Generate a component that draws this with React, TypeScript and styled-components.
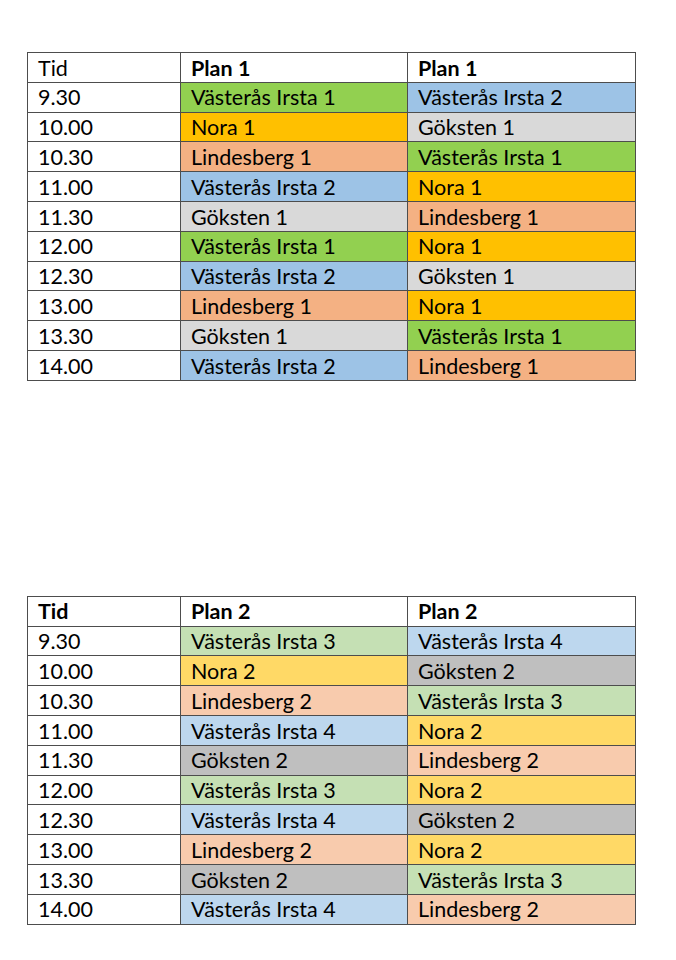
import React from 'react';
import styled, { createGlobalStyle } from 'styled-components';

const GlobalStyle = createGlobalStyle`
  html, body {
    margin: 0;
    padding: 0;
    background: #ffffff;
  }
`;

type Slot = {
  time: string;
  a: string;
  b: string;
};

type Schedule = {
  title: string;
  boldTid: boolean;
  colors: Record<string, string>;
  slots: Slot[];
};

const schedules: Schedule[] = [
  {
    title: 'Plan 1',
    boldTid: false,
    colors: {
      'Västerås Irsta 1': '#92d050',
      'Västerås Irsta 2': '#9dc3e6',
      'Nora 1': '#ffc000',
      'Göksten 1': '#d9d9d9',
      'Lindesberg 1': '#f4b183',
    },
    slots: [
      { time: '9.30', a: 'Västerås Irsta 1', b: 'Västerås Irsta 2' },
      { time: '10.00', a: 'Nora 1', b: 'Göksten 1' },
      { time: '10.30', a: 'Lindesberg 1', b: 'Västerås Irsta 1' },
      { time: '11.00', a: 'Västerås Irsta 2', b: 'Nora 1' },
      { time: '11.30', a: 'Göksten 1', b: 'Lindesberg 1' },
      { time: '12.00', a: 'Västerås Irsta 1', b: 'Nora 1' },
      { time: '12.30', a: 'Västerås Irsta 2', b: 'Göksten 1' },
      { time: '13.00', a: 'Lindesberg 1', b: 'Nora 1' },
      { time: '13.30', a: 'Göksten 1', b: 'Västerås Irsta 1' },
      { time: '14.00', a: 'Västerås Irsta 2', b: 'Lindesberg 1' },
    ],
  },
  {
    title: 'Plan 2',
    boldTid: true,
    colors: {
      'Västerås Irsta 3': '#c5e0b4',
      'Västerås Irsta 4': '#bdd7ee',
      'Nora 2': '#ffd966',
      'Göksten 2': '#bfbfbf',
      'Lindesberg 2': '#f8cbad',
    },
    slots: [
      { time: '9.30', a: 'Västerås Irsta 3', b: 'Västerås Irsta 4' },
      { time: '10.00', a: 'Nora 2', b: 'Göksten 2' },
      { time: '10.30', a: 'Lindesberg 2', b: 'Västerås Irsta 3' },
      { time: '11.00', a: 'Västerås Irsta 4', b: 'Nora 2' },
      { time: '11.30', a: 'Göksten 2', b: 'Lindesberg 2' },
      { time: '12.00', a: 'Västerås Irsta 3', b: 'Nora 2' },
      { time: '12.30', a: 'Västerås Irsta 4', b: 'Göksten 2' },
      { time: '13.00', a: 'Lindesberg 2', b: 'Nora 2' },
      { time: '13.30', a: 'Göksten 2', b: 'Västerås Irsta 3' },
      { time: '14.00', a: 'Västerås Irsta 4', b: 'Lindesberg 2' },
    ],
  },
];

const Page = styled.div`
  width: 676px;
  min-height: 960px;
  box-sizing: border-box;
  padding: 52px 0 0 27px;
  display: flex;
  flex-direction: column;
  gap: 215px;
  font-family: Lato, 'Liberation Sans', sans-serif;
  color: #000;
`;

const Table = styled.table`
  border-collapse: collapse;
  width: 608px;
  table-layout: fixed;
`;

const Row = styled.tr`
  height: 29.8px;
`;

const Cell = styled.td<{ $bg?: string; $bold?: boolean }>`
  border: 1.5px solid #4d4d4d;
  padding: 2px 0 0 10px;
  font-size: 21.5px;
  line-height: 1;
  font-weight: ${(p) => (p.$bold ? 700 : 400)};
  background: ${(p) => p.$bg || '#ffffff'};
  white-space: nowrap;
  vertical-align: middle;
  box-sizing: border-box;
`;

const ScheduleTable = ({ schedule }: { schedule: Schedule }) => (
  <Table>
    <colgroup>
      <col style={{ width: 153 }} />
      <col style={{ width: 227 }} />
      <col style={{ width: 228 }} />
    </colgroup>
    <tbody>
      <Row>
        <Cell $bold={schedule.boldTid}>Tid</Cell>
        <Cell $bold>{schedule.title}</Cell>
        <Cell $bold>{schedule.title}</Cell>
      </Row>
      {schedule.slots.map((s) => (
        <Row key={s.time}>
          <Cell>{s.time}</Cell>
          <Cell $bg={schedule.colors[s.a]}>{s.a}</Cell>
          <Cell $bg={schedule.colors[s.b]}>{s.b}</Cell>
        </Row>
      ))}
    </tbody>
  </Table>
);

const App = () => (
  <>
    <GlobalStyle />
    <Page>
      {schedules.map((s) => (
        <ScheduleTable key={s.title} schedule={s} />
      ))}
    </Page>
  </>
);

export default App;
